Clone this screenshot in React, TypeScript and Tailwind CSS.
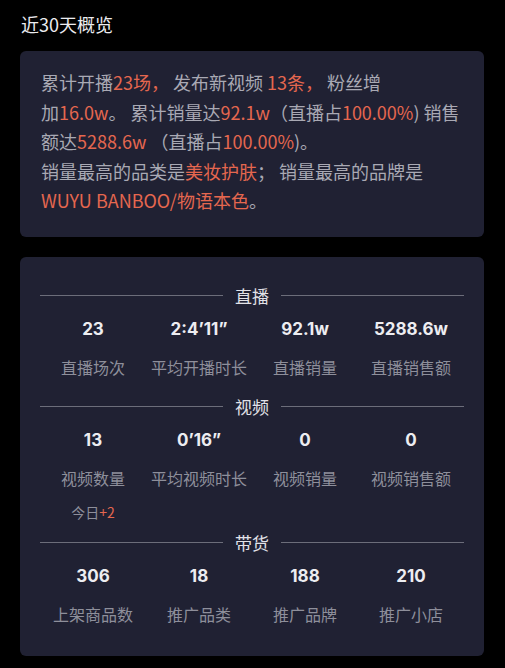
import React from 'react';

const font = { fontFamily: '"Noto Sans CJK SC", "Noto Sans", sans-serif' };
const numFont = { fontFamily: 'Inter, "Noto Sans CJK SC", sans-serif' };

const Hi: React.FC<{ children: React.ReactNode }> = ({ children }) => (
  <span className="text-[#e5674f]">{children}</span>
);

interface Stat {
  value: string;
  label: string;
  extra?: React.ReactNode;
}

const sections: { title: string; stats: Stat[] }[] = [
  {
    title: '直播',
    stats: [
      { value: '23', label: '直播场次' },
      { value: '2:4’11”', label: '平均开播时长' },
      { value: '92.1w', label: '直播销量' },
      { value: '5288.6w', label: '直播销售额' },
    ],
  },
  {
    title: '视频',
    stats: [
      { value: '13', label: '视频数量', extra: <>今日<Hi>+2</Hi></> },
      { value: '0’16”', label: '平均视频时长' },
      { value: '0', label: '视频销量' },
      { value: '0', label: '视频销售额' },
    ],
  },
  {
    title: '带货',
    stats: [
      { value: '306', label: '上架商品数' },
      { value: '18', label: '推广品类' },
      { value: '188', label: '推广品牌' },
      { value: '210', label: '推广小店' },
    ],
  },
];

const SectionHeader: React.FC<{ title: string }> = ({ title }) => (
  <div className="flex items-center gap-3 h-[24px]">
    <div className="flex-1 h-px bg-[#6c6d7a]" />
    <span className="text-[17px] leading-[24px] text-[#e2e2e8]">{title}</span>
    <div className="flex-1 h-px bg-[#6c6d7a]" />
  </div>
);

export default function App() {
  return (
    <div className="min-h-[668px] w-[505px] bg-black" style={font}>
      {/* Title */}
      <div className="px-[21px] pt-[12px] h-[51px]">
        <h1 className="text-[18px] leading-[24px] text-[#ececf0]">近30天概览</h1>
      </div>

      {/* Summary card */}
      <div className="mx-[20px] w-[464px] rounded-md bg-[#202133] pl-[21px] pt-[17px] pb-[21px]">
        <div className="text-[18px] leading-[29.5px] text-[#a9a9b4] whitespace-nowrap">
          <div>
            累计开播<Hi>23场，</Hi> 发布新视频 <Hi>13条，</Hi> 粉丝增
          </div>
          <div>
            加<Hi>16.0w</Hi>。 累计销量达<Hi>92.1w</Hi>（直播占<Hi>100.00%</Hi>) 销售
          </div>
          <div>
            额达<Hi>5288.6w</Hi> （直播占<Hi>100.00%</Hi>)。
          </div>
          <div>
            销量最高的品类是<Hi>美妆护肤</Hi>； 销量最高的品牌是
          </div>
          <div>
            <Hi>WUYU BANBOO/物语本色</Hi>。
          </div>
        </div>
      </div>

      {/* Stats card */}
      <div className="mx-[20px] mt-[20px] w-[464px] rounded-md bg-[#202133] px-[20px] pt-[27px] pb-[30px]">
        {sections.map((s, i) => (
          <div key={s.title} className={i === 0 ? '' : i === 1 ? 'mt-[16px]' : 'mt-[7px]'}>
            <SectionHeader title={s.title} />
            <div className="grid grid-cols-4 mt-[9px]">
              {s.stats.map(st => (
                <div key={st.label} className="flex flex-col items-center">
                  <div
                    className="h-[24px] text-[17px] leading-[24px] font-bold text-[#ededf1]"
                    style={numFont}
                  >
                    {st.value}
                  </div>
                  <div className="mt-[14px] h-[24px] text-[16px] leading-[24px] text-[#8e8f9b]">
                    {st.label}
                  </div>
                  {st.extra && (
                    <div className="mt-[10px] h-[24px] text-[14px] leading-[24px] text-[#8e8f9b]">
                      {st.extra}
                    </div>
                  )}
                </div>
              ))}
            </div>
          </div>
        ))}
      </div>
    </div>
  );
}
